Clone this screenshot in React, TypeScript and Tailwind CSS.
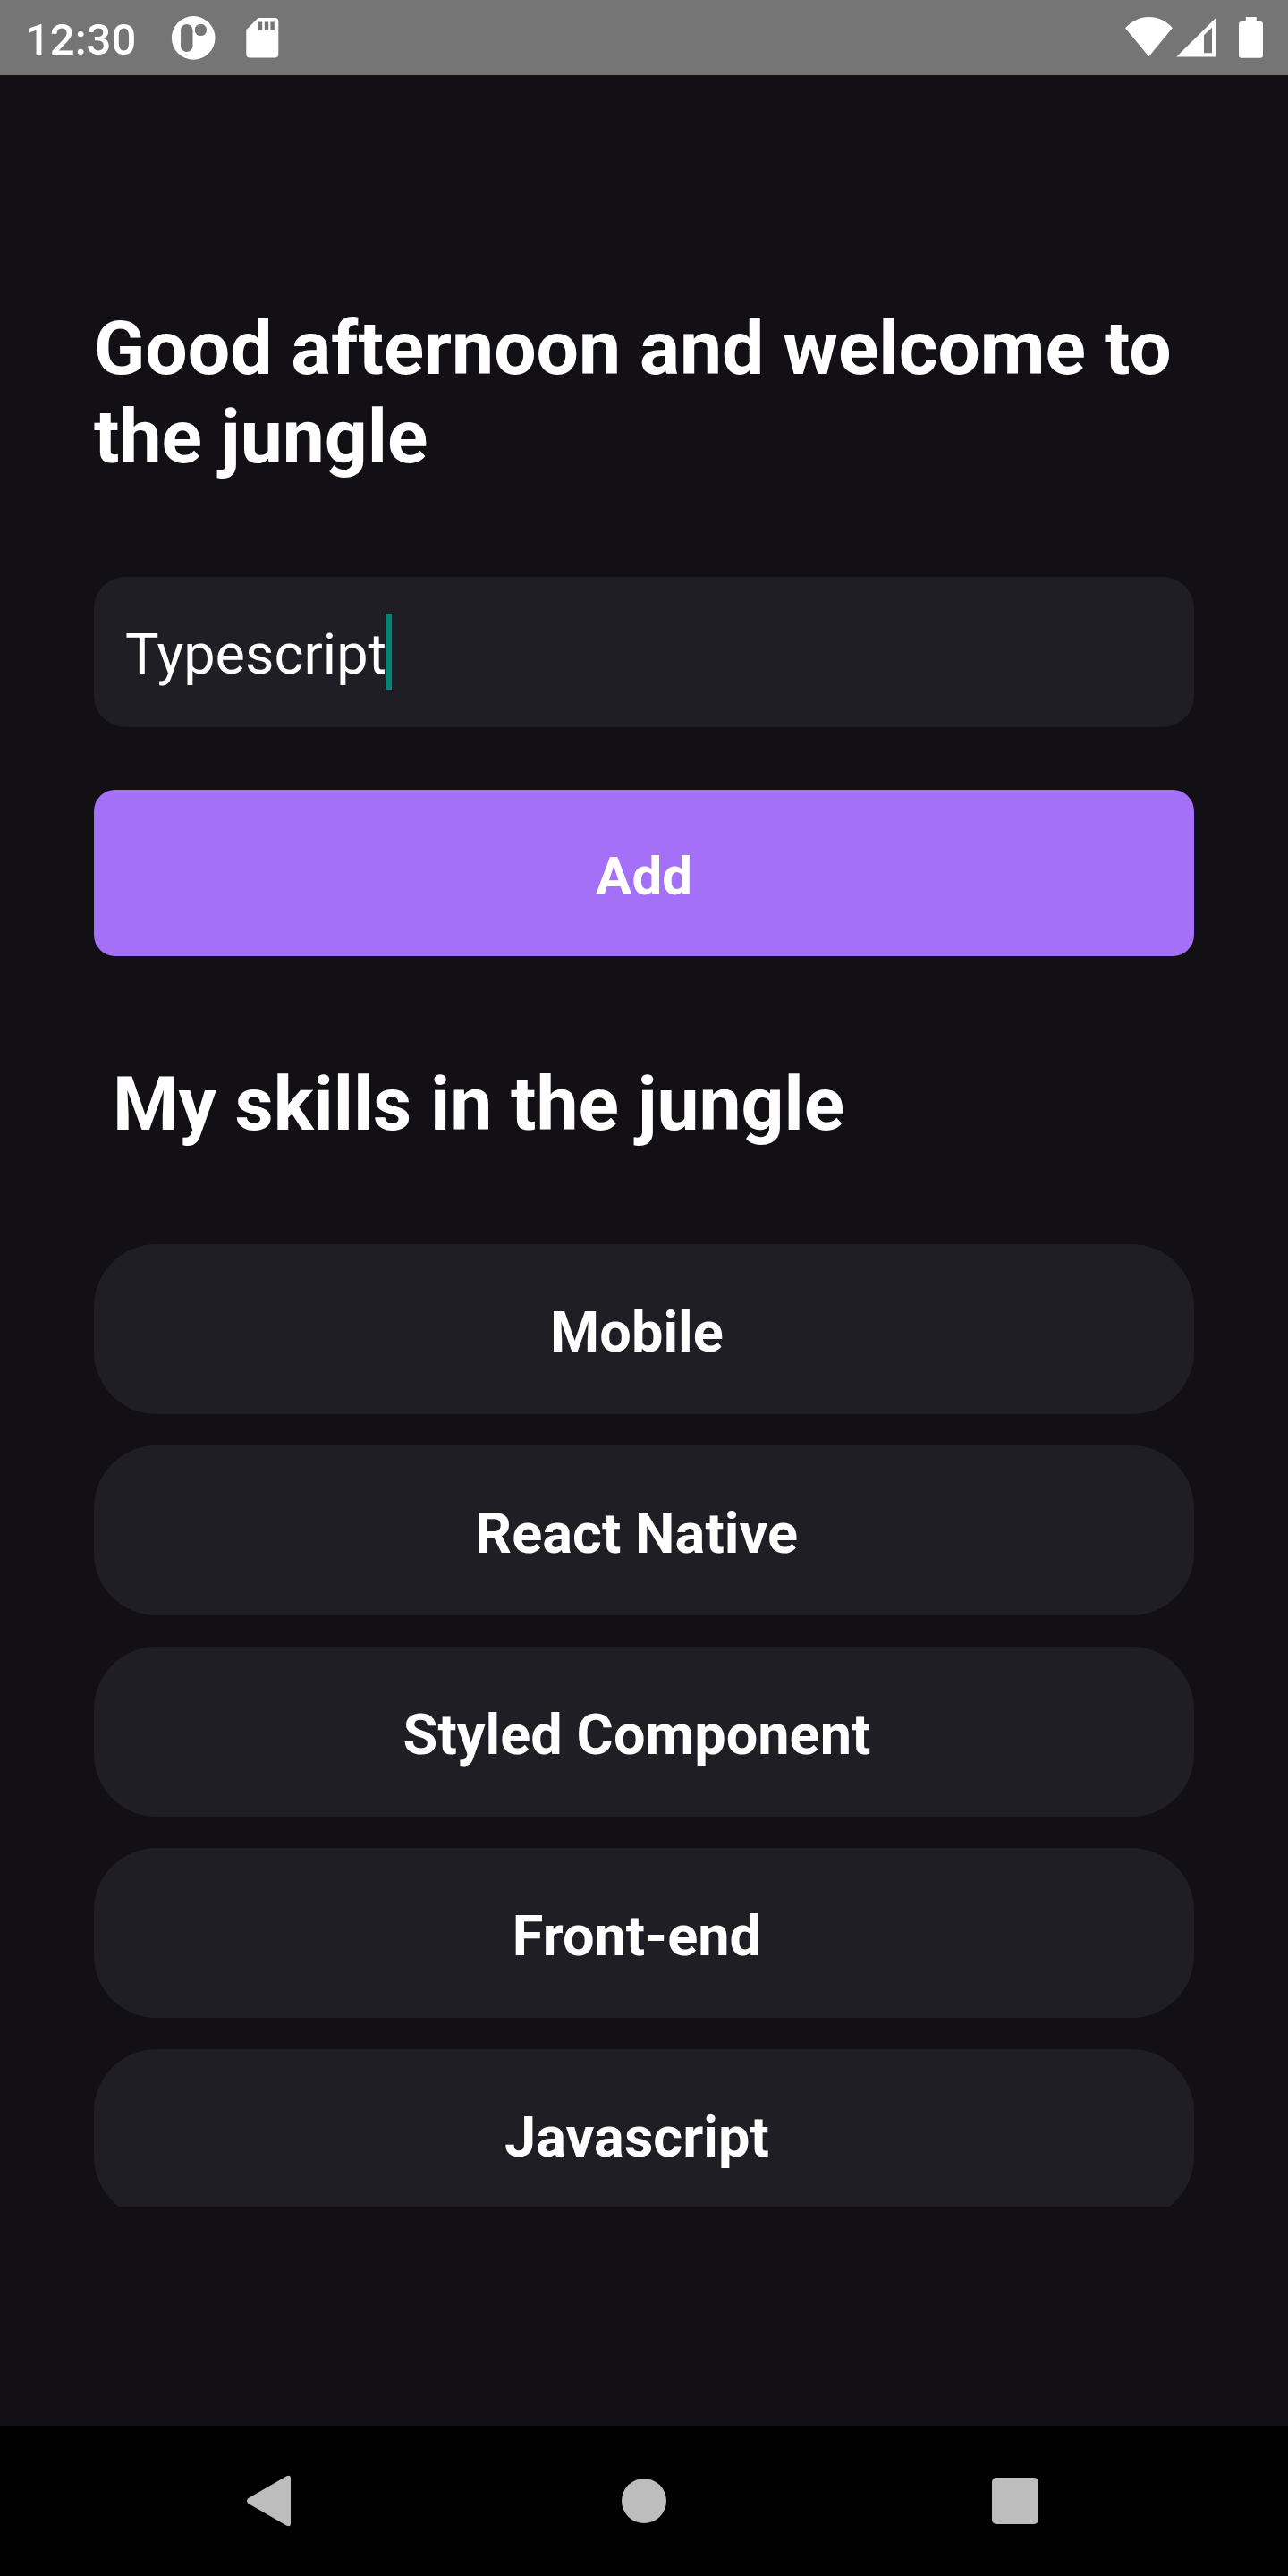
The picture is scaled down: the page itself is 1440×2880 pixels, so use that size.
const skills = ['Mobile', 'React Native', 'Styled Component', 'Front-end', 'Javascript'];

function StatusBar() {
  return (
    <header className="flex h-[84px] shrink-0 items-start bg-[#757575]">
      <span className="mt-[16px] ml-[28px] w-[127px] text-[49px] leading-[58px] font-medium whitespace-nowrap">12:30</span>
      <svg className="ml-[36px]" width="50" height="84" viewBox="191 0 50 84" aria-label="Notification">
        <circle cx="216.200" cy="42.400" r="24.300" fill="white" />
        <rect x="202" y="27" width="13.500" height="31" rx="6.750" fill="#757575" />
        <circle cx="224.400" cy="33.400" r="6.700" fill="#757575" />
      </svg>
      <svg className="ml-[33px]" width="40" height="84" viewBox="274 0 40 84" aria-label="SD card">
        <path d="M288.500 20H307.300a4 4 0 0 1 4 4V60.400a4 4 0 0 1-4 4H279.300a4 4 0 0 1-4-4V33.300Z" fill="white" />
        <path d="M288.800 24.500h4.400v9.200h-4.400zM295.800 24.500h4.400v9.200h-4.400zM302.400 24.500h4.400v9.200h-4.400z" fill="#757575" />
      </svg>
      <svg className="ml-auto" width="182" height="84" viewBox="1258 0 182 84" fill="white" aria-label="Wi-Fi, signal and battery">
        <path d="M1258 31.300C1272 15 1297 15 1310.800 31.300L1284.400 63.300Z" />
        <path fillRule="evenodd" d="M1359.800 19.600V63.600H1315.300ZM1355 30.700L1346 39.300V59.300H1355Z" />
        <path d="M1392.800 19H1404.700V24H1409a3 3 0 0 1 3 3V61.700a3 3 0 0 1-3 3H1388a3 3 0 0 1-3-3V27a3 3 0 0 1 3-3H1392.800Z" />
      </svg>
    </header>
  );
}

function NavigationBar() {
  return (
    <nav className="flex h-[168px] shrink-0 items-center bg-black">
      <svg className="ml-[275px]" width="51" height="60" viewBox="0 0 51 60" fill="#bdbdbd" aria-label="Back">
        <path d="M2.200 27.300L45.500 2.200Q50 0.500 50 5V55Q50 59.500 45.500 57.800L2.200 32.700Q-0.200 30 2.200 27.300Z" />
      </svg>
      <span className="ml-[369px] size-[50px] rounded-full bg-[#bdbdbd]" />
      <span className="ml-[364px] size-[52px] rounded-[5px] bg-[#bdbdbd]" />
    </nav>
  );
}

export default function App() {
  return (
    <div className="flex h-[2880px] w-[1440px] flex-col overflow-hidden bg-[#121015] font-[Roboto,sans-serif] text-white">
      <StatusBar />
      <main className="flex flex-1 flex-col px-[105px] pt-[256px]">
        <h1 className="text-[84px] leading-[99px] font-bold tracking-[0.02px]">Good afternoon and welcome to the jungle</h1>
        <div className="mt-[107px] flex h-[168px] items-start rounded-[35px] bg-[#1f1e25] px-[35px] text-[63px]">
          <span className="mt-[50px] leading-[73px]">Typescript</span>
          <span className="mt-[41px] -ml-px h-[85px] w-[7px] bg-[#008577]" />
        </div>
        <button className="mt-[70px] flex h-[186px] items-start justify-center rounded-[24px] bg-[#a370f7] pt-[61px] text-[60px] leading-[71px] font-bold">
          Add
        </button>
        <h2 className="mt-[116px] ml-[21px] text-[84px] leading-[99px] font-bold tracking-[-0.04px]">My skills in the jungle</h2>
        <ul className="mt-[107px] flex h-[1076px] flex-col gap-[35px] overflow-hidden">
          {skills.map((skill) => (
            <li
              key={skill}
              className="h-[190px] shrink-0 rounded-[70px] bg-[#1f1e25] pt-[62px] pr-[16px] text-center text-[63px] leading-[73px] font-bold tracking-[0.06px]"
            >
              {skill}
            </li>
          ))}
        </ul>
      </main>
      <NavigationBar />
    </div>
  );
}
